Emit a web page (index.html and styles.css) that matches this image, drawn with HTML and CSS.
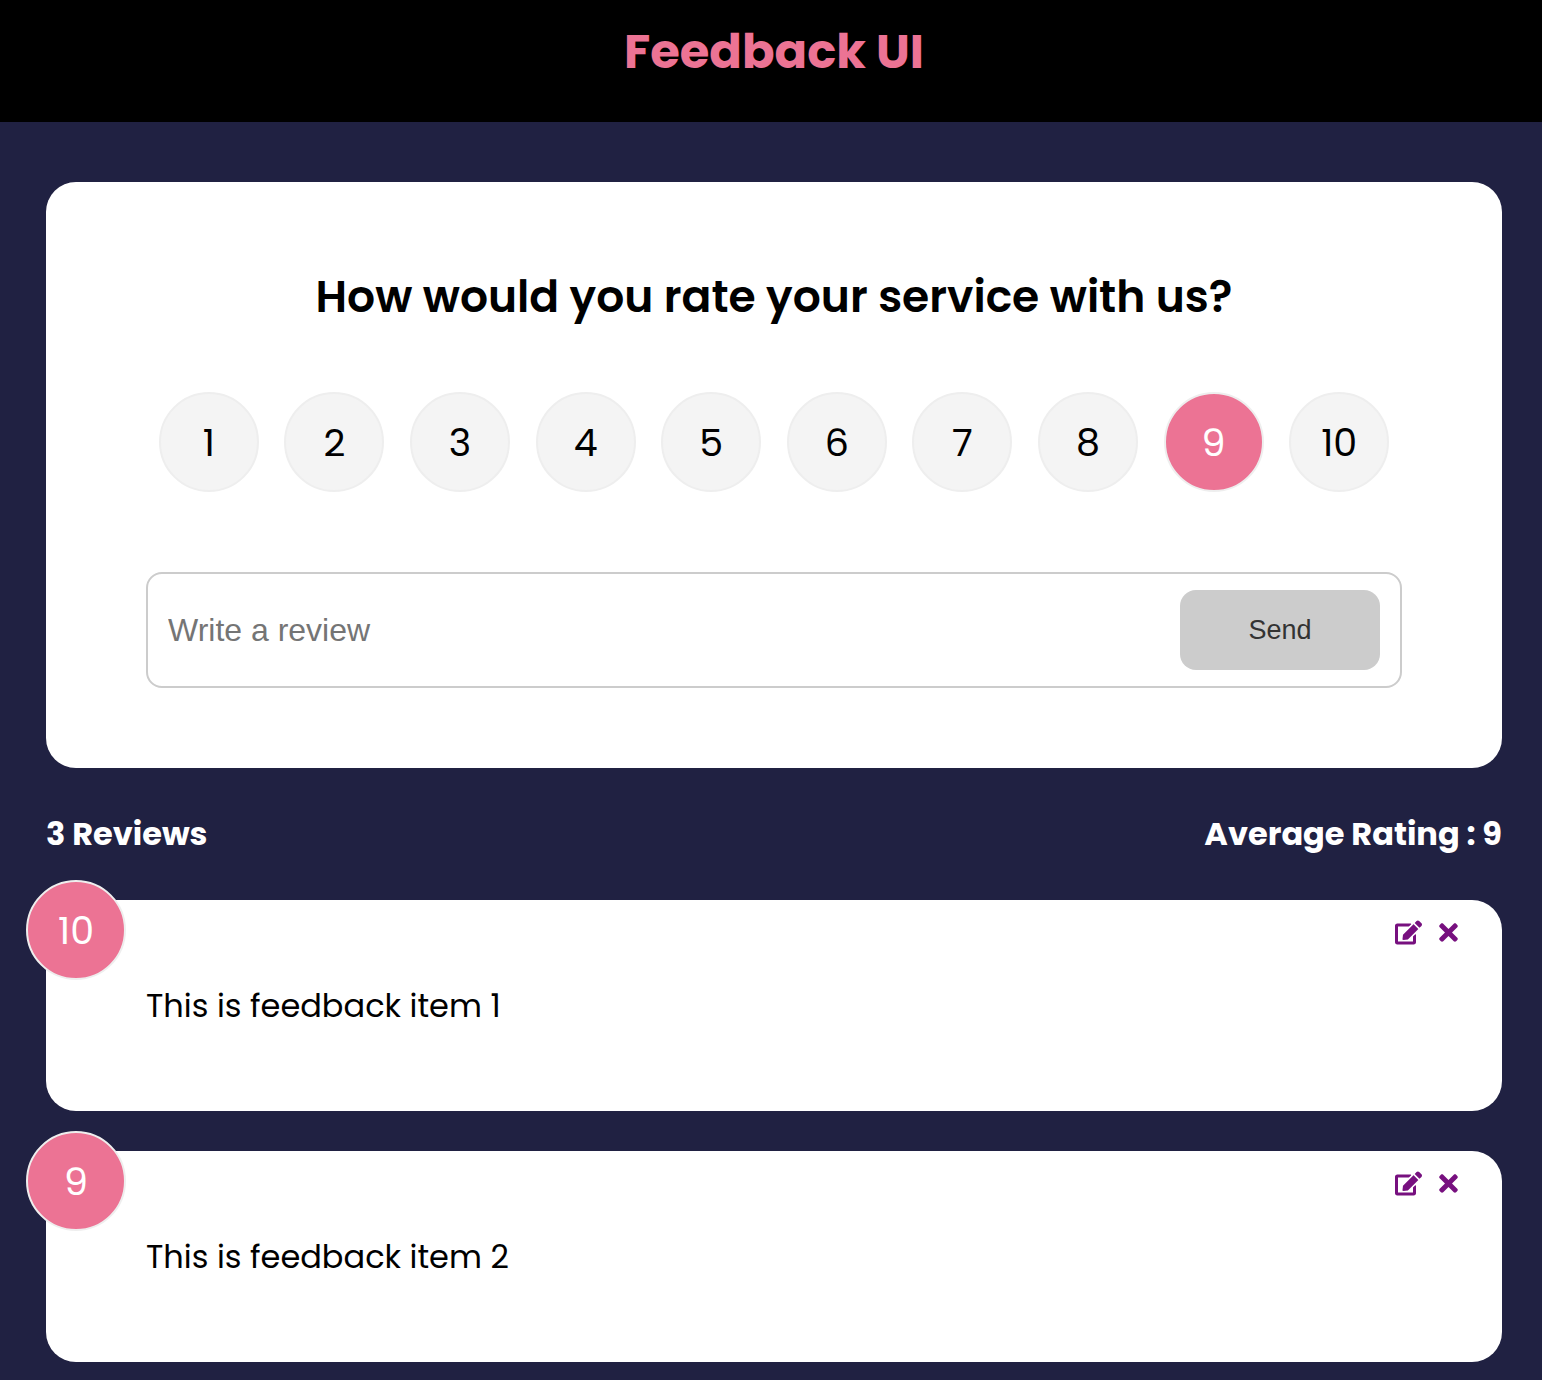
FILE: index.html
```html
<!DOCTYPE html>
<html lang="en">
<head>
<meta charset="utf-8">
<meta name="viewport" content="width=device-width, initial-scale=1">
<title>Feedback UI</title>
<link rel="stylesheet" href="styles.css">
</head>
<body>
<svg class="sprite" aria-hidden="true">
  <symbol id="edit" viewBox="0 0 576 512"><path d="M402.6 83.2l90.2 90.2c3.8 3.8 3.8 10 0 13.8L274.4 405.6l-92.8 10.3c-12.4 1.4-22.9-9.1-21.5-21.5l10.3-92.8L388.8 83.2c3.8-3.8 10-3.8 13.8 0zm162-22.9l-48.8-48.8c-15.2-15.2-39.9-15.2-55.2 0l-35.4 35.4c-3.8 3.8-3.8 10 0 13.8l90.2 90.2c3.8 3.8 10 3.8 13.8 0l35.4-35.4c15.2-15.3 15.2-40 0-55.2zM384 346.2V448H64V128h229.8c3.2 0 6.2-1.3 8.5-3.5l40-40c7.6-7.6 2.2-20.5-8.5-20.5H48C21.5 64 0 85.5 0 112v352c0 26.5 21.5 48 48 48h352c26.5 0 48-21.5 48-48V306.2c0-10.7-12.9-16-20.5-8.5l-40 40c-2.2 2.3-3.5 5.3-3.5 8.5z"/></symbol>
  <symbol id="times" viewBox="0 0 352 512"><path d="M242.72 256l100.07-100.07c12.28-12.28 12.28-32.19 0-44.48l-22.24-22.24c-12.28-12.28-32.19-12.28-44.48 0L176 189.28 75.93 89.21c-12.28-12.28-32.19-12.28-44.48 0L9.21 111.45c-12.28 12.28-12.28 32.19 0 44.48L109.28 256 9.21 356.07c-12.28 12.28-12.28 32.19 0 44.48l22.24 22.24c12.28 12.28 32.2 12.28 44.48 0L176 322.72l100.07 100.07c12.28 12.28 32.2 12.28 44.48 0l22.24-22.24c12.28-12.28 12.28-32.19 0-44.48L242.72 256z"/></symbol>
</svg>
<header class="header"><h1 class="title">Feedback UI</h1></header>
<main class="container">
  <form class="card">
    <h2 class="question" id="question">How would you rate your service with us?</h2>
    <div class="ratings" role="radiogroup" aria-labelledby="question">
      <label class="rating"><input type="radio" name="rating" value="1"><span>1</span></label>
      <label class="rating"><input type="radio" name="rating" value="2"><span>2</span></label>
      <label class="rating"><input type="radio" name="rating" value="3"><span>3</span></label>
      <label class="rating"><input type="radio" name="rating" value="4"><span>4</span></label>
      <label class="rating"><input type="radio" name="rating" value="5"><span>5</span></label>
      <label class="rating"><input type="radio" name="rating" value="6"><span>6</span></label>
      <label class="rating"><input type="radio" name="rating" value="7"><span>7</span></label>
      <label class="rating"><input type="radio" name="rating" value="8"><span>8</span></label>
      <label class="rating"><input type="radio" name="rating" value="9" checked><span>9</span></label>
      <label class="rating"><input type="radio" name="rating" value="10"><span>10</span></label>
    </div>
    <div class="input-group">
      <input class="review-input" type="text" placeholder="Write a review" aria-label="Write a review">
      <button class="send" type="submit" disabled>Send</button>
    </div>
  </form>
  <div class="stats"><h3 class="stat">3 Reviews</h3><h3 class="stat">Average Rating : 9</h3></div>
  <section class="reviews">
    <article class="card review">
      <div class="score">10</div>
      <div class="actions">
        <button class="icon-button" type="button" aria-label="Edit"><svg class="icon"><use href="#edit"/></svg></button>
        <button class="icon-button" type="button" aria-label="Delete"><svg class="icon"><use href="#times"/></svg></button>
      </div>
      <p class="review-text">This is feedback item 1</p>
    </article>
    <article class="card review">
      <div class="score">9</div>
      <div class="actions">
        <button class="icon-button" type="button" aria-label="Edit"><svg class="icon"><use href="#edit"/></svg></button>
        <button class="icon-button" type="button" aria-label="Delete"><svg class="icon"><use href="#times"/></svg></button>
      </div>
      <p class="review-text">This is feedback item 2</p>
    </article>
  </section>
</main>
</body>
</html>
```
FILE: styles.css
```css
* { box-sizing: border-box; margin: 0; padding: 0; }

body {
  min-height: 100vh;
  background: #202142;
  color: #000;
  font-family: Poppins, Inter, sans-serif;
}

.sprite { display: none; }

.header {
  padding: 16px 0 34px 6px;
  background: #000;
  text-align: center;
}

.title {
  color: #ec7394;
  font-size: 48px;
  font-weight: 700;
  line-height: 72px;
}

.container { padding: 60px 40px 16px 46px; }

.card {
  padding: 80px 100px;
  border-radius: 30px;
  background: #fff;
}

.question {
  font-size: 44px;
  font-weight: 600;
  line-height: 70px;
  text-align: center;
}

.ratings {
  display: flex;
  justify-content: space-around;
  margin: 60px 0 80px;
}

.rating { position: relative; cursor: pointer; }

.rating input {
  position: absolute;
  inset: 0;
  opacity: 0;
}

.rating span,
.score {
  display: flex;
  align-items: center;
  justify-content: center;
  width: 100px;
  height: 100px;
  border: 2px solid #eee;
  border-radius: 50%;
  background: #f4f4f4;
  font-size: 38px;
}

.rating input:checked + span,
.score {
  background: #ec7394;
  color: #fff;
}

.input-group {
  display: flex;
  padding: 16px 20px;
  border: 2px solid #ccc;
  border-radius: 16px;
}

.review-input {
  flex: 1;
  min-width: 0;
  border: 0;
  outline: 0;
  background: none;
  font: 32px "Liberation Sans", Arial, sans-serif;
}

.review-input::placeholder { color: #757575; }

.send {
  width: 200px;
  height: 80px;
  border: 0;
  border-radius: 16px;
  background: #ccc;
  color: #333;
  font: 27px "Liberation Sans", Arial, sans-serif;
}

.stats {
  display: flex;
  justify-content: space-between;
  padding: 40px 0;
  color: #fff;
}

.stat {
  font-size: 32px;
  font-weight: 700;
  line-height: 52px;
}

.reviews {
  display: flex;
  flex-direction: column;
  gap: 40px;
}

.review { position: relative; }

.score {
  position: absolute;
  top: -20px;
  left: -20px;
}

.actions {
  position: absolute;
  top: 19px;
  right: 40px;
  display: flex;
  gap: 13px;
}

.icon-button {
  border: 0;
  background: none;
  color: #77107f;
  cursor: pointer;
}

.icon {
  display: block;
  width: 27px;
  height: 27px;
  fill: currentColor;
}

.review-text {
  font-size: 32px;
  line-height: 51px;
}
```
